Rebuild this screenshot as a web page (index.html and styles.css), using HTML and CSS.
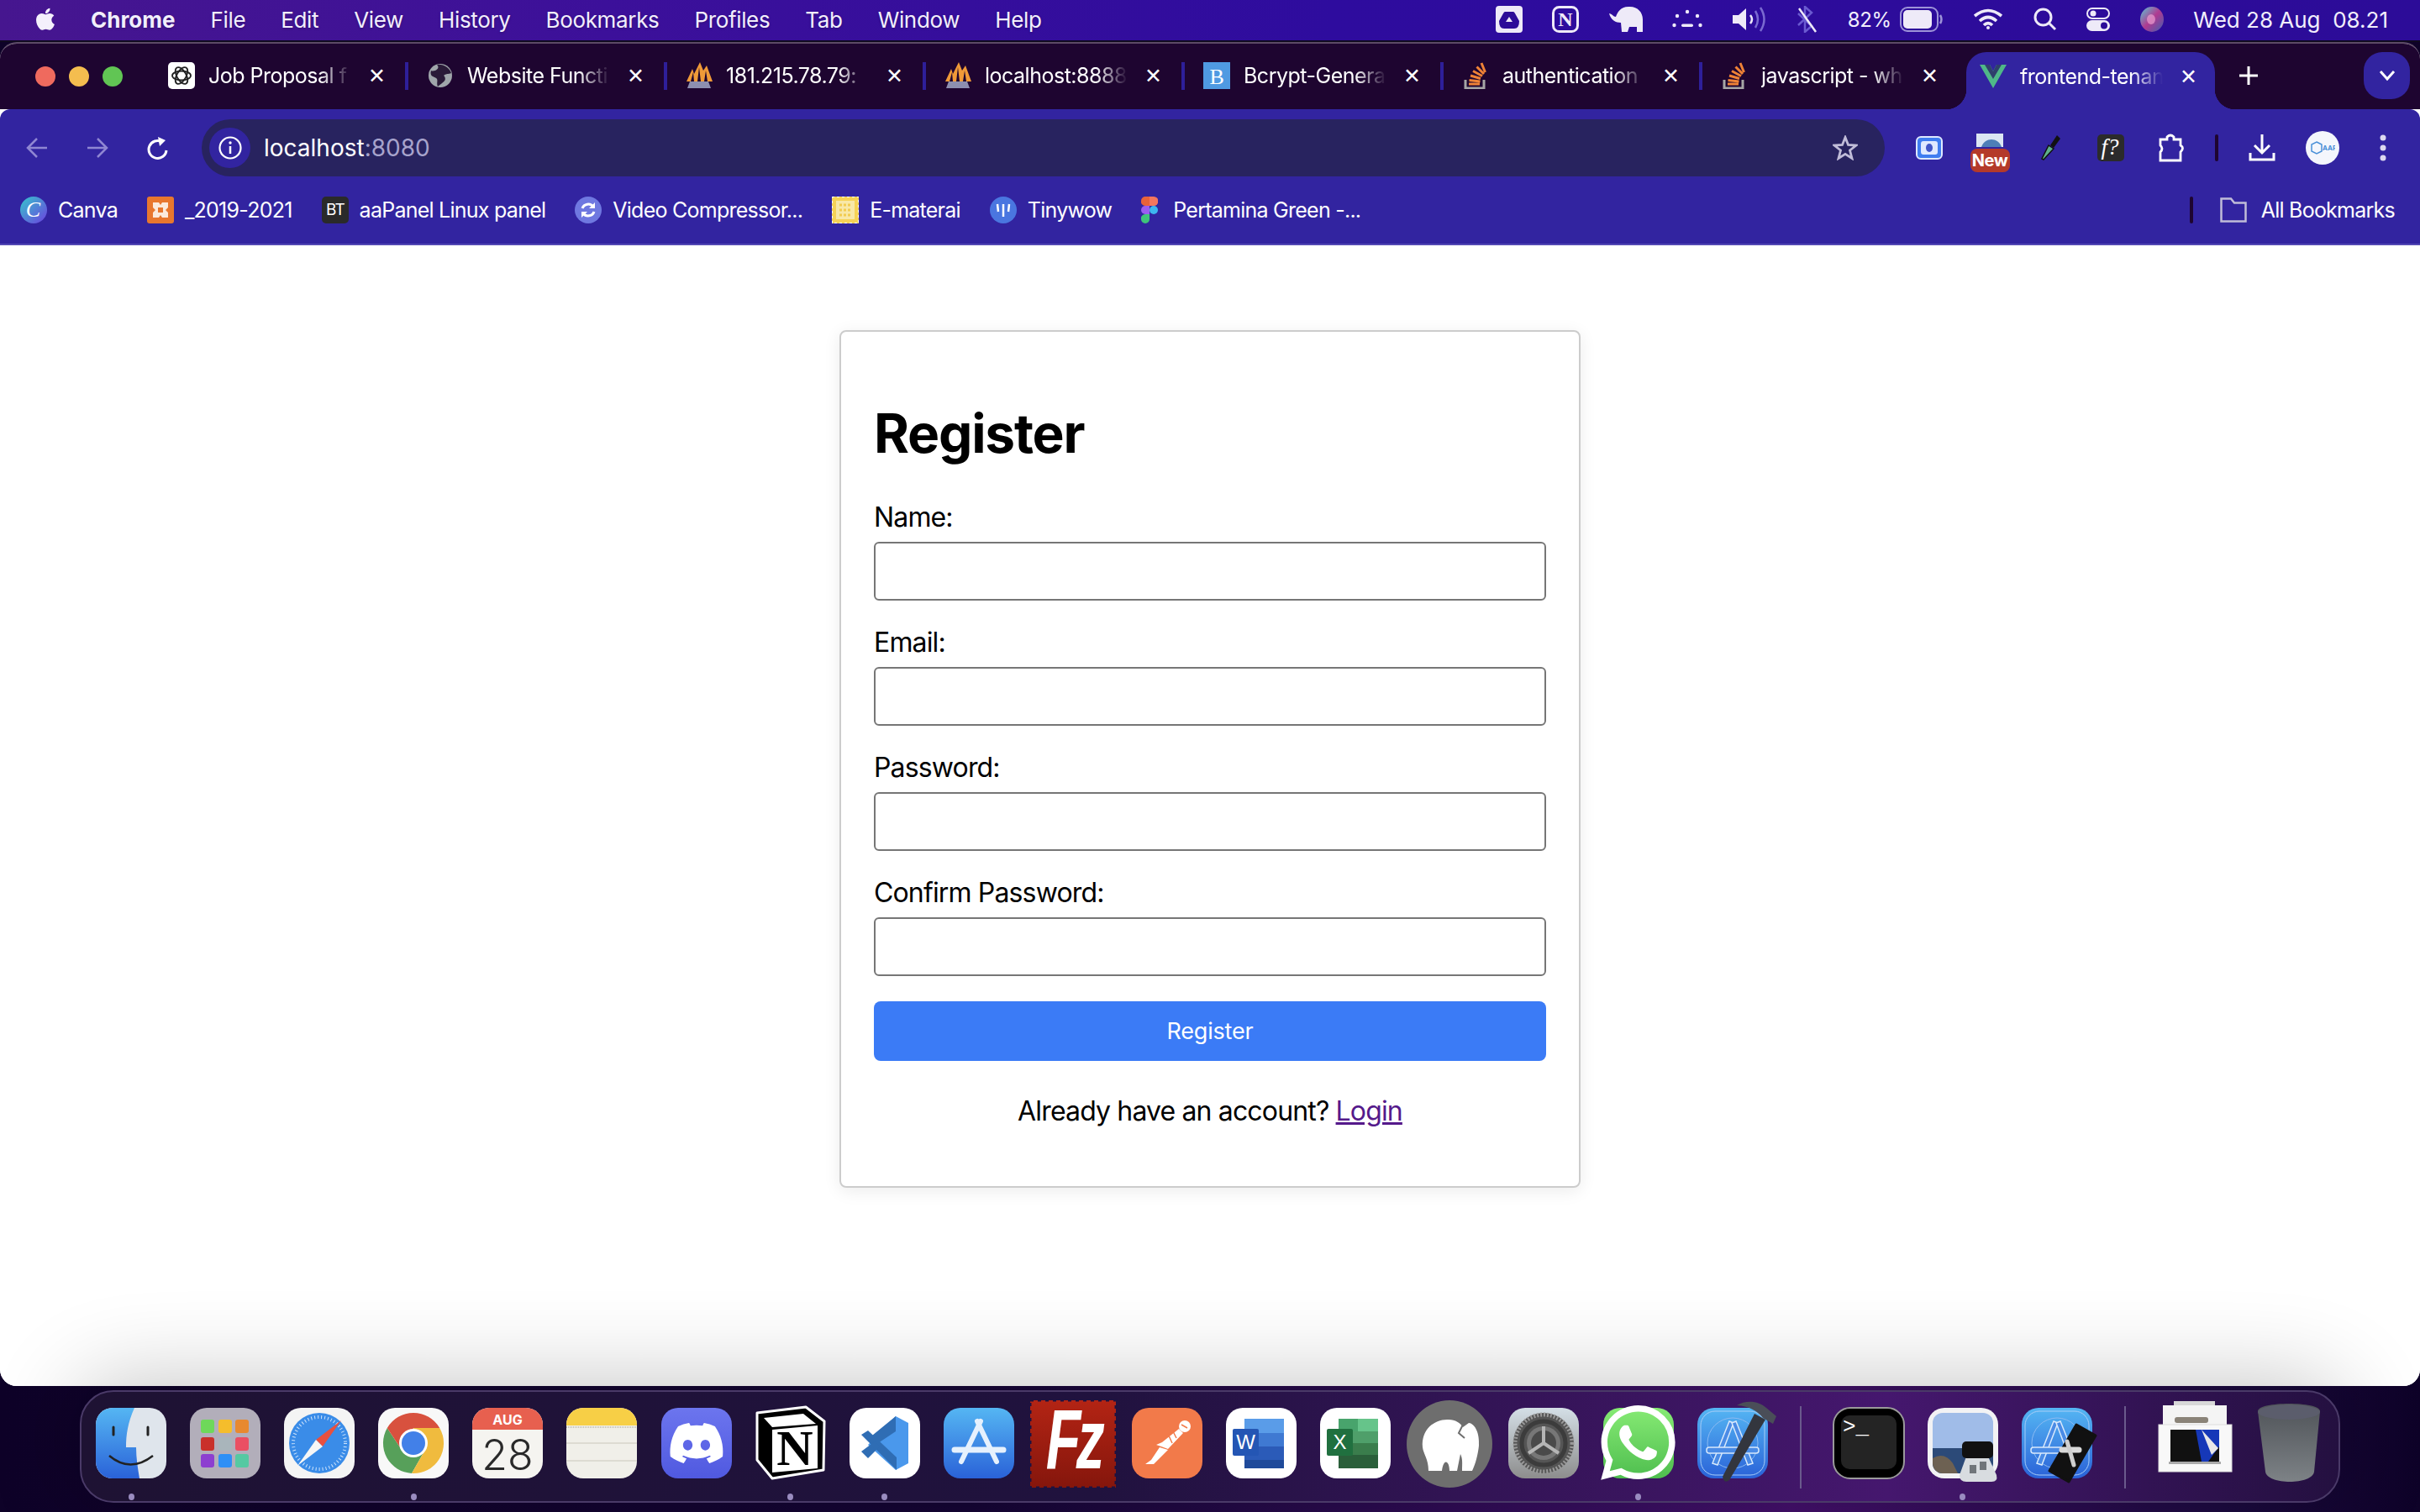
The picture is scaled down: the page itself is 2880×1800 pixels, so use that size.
FILE: index.html
```html
<!DOCTYPE html>
<html lang="en">
<head>
  <meta charset="UTF-8">
  <title>frontend-tenant</title>
  <link rel="stylesheet" href="styles.css">
</head>
<body>

  <svg class="defs" width="0" height="0">
    <symbol id="pma" viewBox="0 0 32 32">
      <path d="M17 0 21 10 25 4 32 23H1L8 8 10 14Z" fill="#f09a38"/>
      <path d="M16 6 14 23H18ZM9 12 6 23H10ZM24 10 22 23H26Z" fill="#1e0530"/>
      <path d="M2 31 5 23H27L30 31Z" fill="#8d8fb0"/>
    </symbol>
    <symbol id="so" viewBox="0 0 32 32">
      <path d="M4 21V31H26V21" fill="none" stroke="#a6a6a6" stroke-width="3"/>
      <path d="M8 26H21M8.500 21.500 21.500 23M10 16 22 19.500M13 10.500 24 16.500M17.500 5.500 26 14M23 1 27.500 12" fill="none" stroke="#ef8236" stroke-width="3"/>
    </symbol>
    <symbol id="elephant" viewBox="0 0 74 66">
      <path d="M5 36C3 14 20 2 36 3 44 3 50 7 53 12L60 7C68 8 73 20 72 34 71 44 68 56 64 64H52C52 56 53 50 50 44L46 64H37C37 52 30 48 28 64H12C12 50 6 44 5 36Z"/>
    </symbol>
    <symbol id="appstore-a" viewBox="0 0 84 84">
      <g fill="none" stroke-linecap="round">
        <path d="M44 16 21 64M40 16 63 64" stroke-width="6"/>
        <path d="M13 50H71" stroke-width="7"/>
      </g>
    </symbol>
    <symbol id="blueprint" viewBox="0 0 84 84">
      <rect width="84" height="84" rx="20" fill="url(#blueGrad)"/>
      <rect x="4" y="4" width="76" height="76" rx="17" fill="none" stroke="#a8cdf7" stroke-width="1"/>
      <circle cx="42" cy="42" r="30" fill="none" stroke="#8bbbf2" stroke-width="1"/>
      <g fill="#4a8be6" stroke="#d8e9fc" stroke-width="1.500">
        <path d="M38 16 43 18 24 68 18 66Z"/>
        <path d="M46 16 41 18 60 68 66 66Z"/>
        <rect x="11" y="47" width="62" height="7" rx="3"/>
      </g>
    </symbol>
    <linearGradient id="blueGrad" x1="0" y1="0" x2="0" y2="1">
      <stop offset="0" stop-color="#55b6f3"/>
      <stop offset="1" stop-color="#2a62d8"/>
    </linearGradient>
    <linearGradient id="orbGrad" x1="0" y1="0" x2="1" y2="1">
      <stop offset="0" stop-color="#58c8d8"/>
      <stop offset=".5" stop-color="#b03a90"/>
      <stop offset="1" stop-color="#3f5fb0"/>
    </linearGradient>
    <linearGradient id="fzGrad" x1="0" y1="0" x2="0" y2="1">
      <stop offset="0" stop-color="#b32414"/>
      <stop offset="1" stop-color="#85160c"/>
    </linearGradient>
    <linearGradient id="waGrad" x1="0" y1="0" x2="0" y2="1">
      <stop offset="0" stop-color="#86ea74"/>
      <stop offset="1" stop-color="#4fbe4f"/>
    </linearGradient>
    <linearGradient id="gearGrad" x1="0" y1="0" x2="0" y2="1">
      <stop offset="0" stop-color="#d4dfe6"/>
      <stop offset="1" stop-color="#8d8d8d"/>
    </linearGradient>
    <linearGradient id="trashGrad" x1="0" y1="0" x2="0" y2="1">
      <stop offset="0" stop-color="#4f5358"/>
      <stop offset="1" stop-color="#7d8286"/>
    </linearGradient>
    <linearGradient id="discordGrad" x1="0" y1="0" x2="0" y2="1">
      <stop offset="0" stop-color="#6c75ee"/>
      <stop offset="1" stop-color="#5059e0"/>
    </linearGradient>
  </svg>

  <header class="menubar">
    <div class="menu-left">
      <svg class="apple" viewBox="3 2.500 18 18.500"><path d="M17.050 20.280c-.98.950-2.050.800-3.080.350-1.090-.460-2.090-.480-3.240 0-1.440.620-2.200.440-3.060-.350C2.790 15.250 3.510 7.590 9.050 7.310c1.350.070 2.290.740 3.080.800 1.180-.240 2.310-.930 3.570-.840 1.510.120 2.650.720 3.400 1.800-3.120 1.870-2.380 5.980.48 7.130-.57 1.500-1.310 2.990-2.540 4.090zM12.030 7.250c-.150-2.230 1.660-4.070 3.740-4.250.290 2.580-2.340 4.500-3.740 4.250z"/></svg>
      <b>Chrome</b><span>File</span><span>Edit</span><span>View</span><span>History</span><span>Bookmarks</span><span>Profiles</span><span>Tab</span><span>Window</span><span>Help</span>
    </div>
    <div class="menu-right">
      <svg width="32" height="32" viewBox="0 0 32 32"><rect width="32" height="32" rx="4" fill="#eeeaf8"/><path d="M11 7H21Q22 7 23 9L28 18Q28 27 22 27H10Q4 27 4 18L9 9Q10 7 11 7Z" fill="#2c0c98"/><path d="M16 13 20 19H12Z" fill="#eeeaf8"/></svg>
      <svg width="32" height="32" viewBox="0 0 32 32"><rect x="1.500" y="1.500" width="29" height="29" rx="7" fill="none" stroke="#eeeaf8" stroke-width="3"/><text x="16" y="24" class="st-n">N</text></svg>
      <svg width="40" height="32" viewBox="0 0 40 32" fill="#eeeaf8"><path d="M0 9C3 9 5 13 8 13 10 8 13 1 23 1 33 0 40 7 40 16V31H33V25H24L22 31H15L14 20C8 20 2 17 0 9Z"/></svg>
      <svg width="36" height="24" viewBox="0 0 36 24" fill="#eeeaf8"><circle cx="18" cy="3" r="2.200"/><circle cx="6" cy="8" r="2.200"/><circle cx="30" cy="8" r="2.200"/><circle cx="2.500" cy="19" r="2.200"/><rect x="11" y="17.500" width="14" height="3.500" rx="1.700"/><circle cx="33.500" cy="19" r="2.200"/></svg>
      <svg width="40" height="32" viewBox="0 0 40 32"><path d="M0 11H7L16 3V29L7 21H0Z" fill="#eeeaf8"/><path d="M21 11Q25 16 21 21" fill="none" stroke="#eeeaf8" stroke-width="2.500"/><path d="M27 6Q33 16 27 26M33 2Q42 16 33 30" fill="none" stroke="#7a6ad0" stroke-width="2.500"/></svg>
      <svg width="26" height="32" viewBox="0 0 26 32" fill="none" stroke-width="2.500"><path d="M3 9 19 24 11 31V1L19 8 3 23" stroke="#6a5ad0"/><path d="M4 3 24 31" stroke="#eeeaf8"/></svg>
      <div class="battery-group">
        <span>82%</span>
        <svg width="52" height="30" viewBox="0 0 52 30"><rect x="1" y="1" width="44" height="28" rx="8" fill="none" stroke="#9d93d8" stroke-width="2"/><rect x="4" y="4" width="34" height="22" rx="5" fill="#eeeaf8"/><path d="M48 10Q51 15 48 20" fill="none" stroke="#9d93d8" stroke-width="2.500"/></svg>
      </div>
      <svg width="36" height="26" viewBox="0 0 36 26" fill="none" stroke="#eeeaf8" stroke-width="3.600"><path d="M2 9Q18 -4 34 9M8 15Q18 6 28 15M13 20Q18 15 23 20"/><circle cx="18" cy="23" r="2" fill="#eeeaf8" stroke="none"/></svg>
      <svg width="28" height="28" viewBox="0 0 28 28" fill="none" stroke="#eeeaf8" stroke-width="3"><circle cx="11.500" cy="11.500" r="9.500"/><path d="M18 18 26 26"/></svg>
      <svg width="28" height="28" viewBox="0 0 28 28"><rect x="1" y="1" width="26" height="12" rx="6" fill="none" stroke="#eeeaf8" stroke-width="2"/><circle cx="8" cy="7" r="3.500" fill="#eeeaf8"/><rect y="15" width="28" height="13" rx="6.500" fill="#eeeaf8"/><circle cx="21" cy="21.500" r="4" fill="#2c0c98"/></svg>
      <svg width="28" height="30" viewBox="0 0 28 30"><ellipse cx="14" cy="15" rx="14" ry="15" fill="url(#orbGrad)"/><ellipse cx="13" cy="15" rx="5" ry="6" fill="#e9a0d0" opacity=".7"/></svg>
      <span class="clock">Wed 28 Aug&nbsp; 08.21</span>
    </div>
  </header>

  <div class="window">
    <div class="tabstrip">
      <div class="traffic">
        <i class="red"></i><i class="yellow"></i><i class="green"></i>
      </div>
      <div class="tab">
        <svg width="32" height="32" viewBox="0 0 32 32"><rect width="32" height="32" rx="5" fill="#fff"/><g fill="none" stroke="#222" stroke-width="1.800"><ellipse cx="16" cy="16" rx="11" ry="5.500"/><ellipse cx="16" cy="16" rx="11" ry="5.500" transform="rotate(60 16 16)"/><ellipse cx="16" cy="16" rx="11" ry="5.500" transform="rotate(120 16 16)"/></g></svg>
        <span class="tab-title">Job Proposal f</span><span class="tab-x">✕</span>
      </div>
      <div class="tab">
        <svg width="32" height="32" viewBox="0 0 32 32"><circle cx="16" cy="16" r="14" fill="#a0a6ab"/><path d="M12 3C17 8 8 12 5 10 3 17 8 17 11 19 14 21 11 25 13 29 19 24 24 22 21 17 18 14 28 14 29 13 27 7 20 2 12 3Z" fill="#2a1a38"/></svg>
        <span class="tab-title">Website Functi</span><span class="tab-x">✕</span>
      </div>
      <div class="tab">
        <svg width="32" height="32"><use href="#pma"/></svg>
        <span class="tab-title">181.215.78.79:</span><span class="tab-x">✕</span>
      </div>
      <div class="tab">
        <svg width="32" height="32"><use href="#pma"/></svg>
        <span class="tab-title">localhost:8888</span><span class="tab-x">✕</span>
      </div>
      <div class="tab">
        <svg width="32" height="32" viewBox="0 0 32 32"><rect width="32" height="32" fill="#4f9ae2"/><text x="16" y="26" class="fav-b">B</text></svg>
        <span class="tab-title">Bcrypt-Genera</span><span class="tab-x">✕</span>
      </div>
      <div class="tab">
        <svg width="32" height="32"><use href="#so"/></svg>
        <span class="tab-title">authentication</span><span class="tab-x">✕</span>
      </div>
      <div class="tab tab-last">
        <svg width="32" height="32"><use href="#so"/></svg>
        <span class="tab-title">javascript - wh</span><span class="tab-x">✕</span>
      </div>
      <div class="tab tab-active">
        <svg width="32" height="32" viewBox="0 0 32 32"><path d="M0 2H12L16 10 20 2H32L16 30Z" fill="#4fb888"/><path d="M6 2H12L16 10 20 2H26L16 19Z" fill="#2f3f6c"/></svg>
        <span class="tab-title">frontend-tenan</span><span class="tab-x">✕</span>
      </div>
      <svg class="new-tab" width="24" height="24" viewBox="0 0 24 24"><path d="M12 1V23M1 12H23" stroke="#fff" stroke-width="3"/></svg>
      <div class="tab-search">
        <svg width="20" height="14" viewBox="0 0 20 14"><path d="M2 2 10 11 18 2" fill="none" stroke="#fff" stroke-width="3"/></svg>
      </div>
    </div>

    <div class="toolbar">
      <div class="navrow">
        <div class="nav-btns">
          <svg width="26" height="26" viewBox="0 0 26 26" fill="none" stroke="#8f86d2" stroke-width="2.500"><path d="M25 13H2M13 2 2 13 13 24"/></svg>
          <svg width="26" height="26" viewBox="0 0 26 26" fill="none" stroke="#8f86d2" stroke-width="2.500"><path d="M1 13H24M13 2 24 13 13 24"/></svg>
          <svg width="26" height="28" viewBox="0 0 26 28" fill="none" stroke="#fff" stroke-width="3"><path d="M23 17A10.500 10.500 0 1 1 18 7"/><path d="M13 1 22 5 15 12Z" fill="#fff" stroke="none"/></svg>
        </div>
        <div class="omnibox">
          <div class="site-info">
            <svg width="28" height="28" viewBox="0 0 28 28"><circle cx="14" cy="14" r="12.500" fill="none" stroke="#fff" stroke-width="2.200"/><path d="M14 12V21" stroke="#fff" stroke-width="2.500"/><circle cx="14" cy="8" r="1.700" fill="#fff"/></svg>
          </div>
          <span class="url">localhost<em>:8080</em></span>
          <svg class="star" width="30" height="30" viewBox="0 0 30 30"><path d="M15 2.500 18.500 11.500 28 12 20.500 18 23 27.500 15 22.300 7 27.500 9.500 18 2 12 11.500 11.500Z" fill="none" stroke="#c0bcd8" stroke-width="2.800"/></svg>
        </div>
        <div class="actions">
          <div class="action"><svg width="32" height="28" viewBox="0 0 32 28"><rect x="1" y="1" width="30" height="26" rx="5" fill="#3f7df0" stroke="#dfe9ff" stroke-width="2"/><rect x="6" y="6" width="20" height="16" rx="3" fill="#dfe9ff"/><ellipse cx="16" cy="14" rx="4" ry="5" fill="#4256c8"/></svg></div>
          <div class="action action-new"><svg width="32" height="16" viewBox="0 0 32 16"><rect width="32" height="16" fill="#dbe6f2"/><path d="M6 16C10 4 26 4 30 16Z" fill="#4d7fb8"/></svg><span class="badge">New</span></div>
          <div class="action"><svg width="28" height="34" viewBox="0 0 28 34"><path d="M22 2 14 14 18 17 26 6Z" fill="#111"/><path d="M12 14 4 30 6 31 18 18Z" fill="#5eb08a" stroke="#111" stroke-width="1.500"/></svg></div>
          <div class="action"><svg width="32" height="32" viewBox="0 0 32 32"><rect width="32" height="32" rx="5" fill="#2b2b2b"/><text x="15" y="24" class="fav-f">f?</text></svg></div>
          <div class="action"><svg width="32" height="34" viewBox="0 0 32 34" fill="none" stroke="#fff" stroke-width="2.800"><path d="M3 7H11V4Q15 0 19 4V7H27V14Q32 17 27 22V32H3V22Q7 18 3 14Z"/></svg></div>
          <div class="action-sep"></div>
          <div class="action"><svg width="32" height="32" viewBox="0 0 32 32" fill="none" stroke="#fff" stroke-width="3"><path d="M16 0V22M7 13 16 22 25 13M2 22V30H30V22"/></svg></div>
          <div class="action"><div class="avatar"><svg width="30" height="16" viewBox="0 0 30 16"><path d="M8 1 14 4V12L8 15 2 12V4Z" fill="none" stroke="#4a90d8" stroke-width="1.500"/><text x="15" y="11" class="avatar-text">AAR</text></svg></div></div>
          <div class="action"><svg width="8" height="32" viewBox="0 0 8 32" fill="#dcd8f0"><circle cx="4" cy="4" r="3.500"/><circle cx="4" cy="16" r="3.500"/><circle cx="4" cy="28" r="3.500"/></svg></div>
        </div>
      </div>

      <div class="bookmarks">
        <a class="bm"><svg width="32" height="32" viewBox="0 0 32 32"><defs><linearGradient id="canvaGrad" x1="0" y1="0" x2="1" y2="1"><stop offset="0" stop-color="#35c8cc"/><stop offset="1" stop-color="#6d3fe0"/></linearGradient></defs><circle cx="16" cy="16" r="16" fill="url(#canvaGrad)"/><text x="15" y="24" class="fav-c">C</text></svg>Canva</a>
        <a class="bm"><svg width="32" height="32" viewBox="0 0 32 32"><rect width="32" height="32" rx="3" fill="#e8772e"/><path d="M7 7H14L16 10 18 7H25V13L22 16 25 19V25H18L16 22 14 25H7V19L10 16 7 13Z" fill="#fbeadc"/><rect x="13" y="13" width="6" height="6" fill="#e8772e"/></svg>_2019-2021</a>
        <a class="bm"><svg width="32" height="32" viewBox="0 0 32 32"><rect width="32" height="32" rx="5" fill="#2a2a2a"/><text x="16" y="22" class="fav-bt">BT</text></svg>aaPanel Linux panel</a>
        <a class="bm"><svg width="32" height="32" viewBox="0 0 32 32"><circle cx="16" cy="16" r="16" fill="#6f78e0"/><path d="M9 14A7.500 7.500 0 0 1 22 12M23 18A7.500 7.500 0 0 1 10 20" fill="none" stroke="#fff" stroke-width="3"/><path d="M24 7V14H17ZM8 25V18H15Z" fill="#fff"/></svg>Video Compressor...</a>
        <a class="bm"><svg width="32" height="32" viewBox="0 0 32 32"><rect width="32" height="32" fill="#f6d257"/><rect x="5" y="5" width="22" height="22" fill="#f8e8a8"/><path d="M0 0H32V32H0Z" fill="none" stroke="#fff" stroke-width="2" stroke-dasharray="3 3"/><path d="M9 10H23M9 16H23M9 22H23" stroke="#f2cc50" stroke-width="3" stroke-dasharray="3 2"/></svg>E-materai</a>
        <a class="bm"><svg width="32" height="32" viewBox="0 0 32 32"><circle cx="16" cy="16" r="16" fill="#4a76e0"/><path d="M9 9 10 18M16 9V24M23 9 22 18" stroke="#fff" stroke-width="2.500"/></svg>Tinywow</a>
        <a class="bm bm-figma"><svg width="20" height="32" viewBox="0 0 20 32"><path d="M0 5A5 5 0 0 1 5 0H10V11H5A5 5 0 0 1 0 5Z" fill="#e8623a"/><path d="M10 0H15A5 5 0 0 1 15 11H10Z" fill="#f4765e"/><path d="M0 16A5 5 0 0 1 5 11H10V21H5A5 5 0 0 1 0 16Z" fill="#9a5cf0"/><circle cx="15" cy="16" r="5" fill="#3db6f0"/><path d="M0 27A5 5 0 0 1 5 21H10V27A5 5 0 0 1 0 27Z" fill="#3fc47a"/></svg>Pertamina Green -...</a>
        <div class="bm-sep"></div>
        <a class="bm bm-all"><svg width="32" height="30" viewBox="0 0 32 30"><path d="M1.500 28.500V1.500H13L17 6.500H30.500V28.500Z" fill="none" stroke="#c0bcd8" stroke-width="2.500"/></svg>All Bookmarks</a>
      </div>
    </div>

    <main class="page">
      <div class="card">
        <h1>Register</h1>
        <form>
          <div class="form-group">
            <label for="name">Name:</label>
            <input id="name" type="text">
          </div>
          <div class="form-group">
            <label for="email">Email:</label>
            <input id="email" type="email">
          </div>
          <div class="form-group">
            <label for="password">Password:</label>
            <input id="password" type="password">
          </div>
          <div class="form-group">
            <label for="confirm">Confirm Password:</label>
            <input id="confirm" type="password">
          </div>
          <button type="button" class="submit">Register</button>
        </form>
        <p class="switch">Already have an account? <a href="#">Login</a></p>
      </div>
    </main>
  </div>

  <footer class="dock">
    <div class="dock-item on"><svg viewBox="0 0 84 84"><rect width="84" height="84" rx="20" fill="#dfe5ec"/><path d="M20 0H46C38 18 36 32 36 47H48C48 60 50 72 52 84H20A20 20 0 0 1 0 64V20A20 20 0 0 1 20 0Z" fill="url(#blueGrad)"/><path d="M21 23V32M62 23V32" stroke="#222" stroke-width="3" stroke-linecap="round"/><path d="M16 57Q41 78 68 57" fill="none" stroke="#222" stroke-width="2.500"/></svg><span class="dot"></span></div>
    <div class="dock-item"><svg viewBox="0 0 84 84"><rect width="84" height="84" rx="20" fill="#b2aeba"/><g><rect x="13" y="14" width="16" height="16" rx="3" fill="#6ed85a"/><rect x="34" y="14" width="16" height="16" rx="3" fill="#f5bd2c"/><rect x="54" y="14" width="16" height="16" rx="3" fill="#e8892f"/><rect x="13" y="35" width="16" height="16" rx="3" fill="#c9302a"/><rect x="34" y="35" width="16" height="16" rx="3" fill="#a9b5bb"/><rect x="54" y="35" width="16" height="16" rx="3" fill="#ea4f63"/><rect x="13" y="55" width="16" height="16" rx="3" fill="#8d3fd0"/><rect x="34" y="55" width="16" height="16" rx="3" fill="#2f8ff6"/><rect x="54" y="55" width="16" height="16" rx="3" fill="#55c9a2"/></g></svg></div>
    <div class="dock-item"><svg viewBox="0 0 84 84"><rect width="84" height="84" rx="20" fill="#f4f4f4"/><circle cx="42" cy="42" r="36" fill="#3a8ce8"/><circle cx="42" cy="42" r="31" fill="none" stroke="#cfe4fb" stroke-width="4" stroke-dasharray="1 3"/><path d="M68 15 46 46 38 38Z" fill="#e8503f"/><path d="M16 69 38 38 46 46Z" fill="#f6f6f6"/></svg></div>
    <div class="dock-item on"><svg viewBox="0 0 84 84"><rect width="84" height="84" rx="20" fill="#f8f8f8"/><path d="M10.800 24A36 36 0 0 0 40 78L56 50H28Z" fill="#57a05a"/><path d="M73.200 24A36 36 0 0 1 40 78L56 50 42 24Z" fill="#f0bb3e"/><path d="M10.800 24A36 36 0 0 1 73.200 24H42L28 50Z" fill="#d8513e"/><circle cx="42" cy="42" r="17" fill="#fff"/><circle cx="42" cy="42" r="14" fill="#4280e8"/></svg><span class="dot"></span></div>
    <div class="dock-item"><svg viewBox="0 0 84 84"><rect width="84" height="84" rx="20" fill="#f5f4f0"/><path d="M0 26V20A20 20 0 0 1 20 0H64A20 20 0 0 1 84 20V26Z" fill="#e7604f"/><text x="42" y="20" class="cal-mon">AUG</text><text x="42" y="74" class="cal-day">28</text></svg></div>
    <div class="dock-item"><svg viewBox="0 0 84 84"><rect width="84" height="84" rx="20" fill="#f0efe9"/><path d="M0 21V20A20 20 0 0 1 20 0H64A20 20 0 0 1 84 20V21Z" fill="#f7cf46"/><path d="M0 23H84" stroke="#c8c4b8" stroke-width="2" stroke-dasharray="1 1"/><path d="M0 42H84M0 63H84" stroke="#dddbd2" stroke-width="2"/></svg></div>
    <div class="dock-item"><svg viewBox="0 0 84 84"><rect width="84" height="84" rx="20" fill="url(#discordGrad)"/><g transform="translate(10.500 10.500) scale(2.620)"><path fill="#fff" d="M20.317 4.370a19.791 19.791 0 00-4.885-1.515.074.074 0 00-.079.037c-.211.375-.445.865-.608 1.250-1.845-.276-3.680-.276-5.487 0-.164-.393-.406-.874-.618-1.250a.077.077 0 00-.079-.037 19.736 19.736 0 00-4.885 1.515.070.070 0 00-.032.028C.533 9.046-.319 13.580.099 18.058a.082.082 0 00.031.056c2.053 1.508 4.041 2.423 5.993 3.029a.078.078 0 00.084-.028c.462-.630.873-1.295 1.226-1.994a.076.076 0 00-.042-.106c-.653-.248-1.274-.550-1.872-.892a.077.077 0 01-.008-.128c.126-.094.252-.192.372-.291a.074.074 0 01.078-.011c3.928 1.793 8.180 1.793 12.061 0a.074.074 0 01.079.010c.120.099.246.198.373.292a.077.077 0 01-.007.128 12.299 12.299 0 01-1.873.891.077.077 0 00-.041.107c.360.698.772 1.363 1.225 1.993a.076.076 0 00.084.029c1.961-.607 3.950-1.522 6.002-3.029a.077.077 0 00.031-.055c.500-5.177-.838-9.674-3.549-13.660a.061.061 0 00-.031-.029zM8.020 15.331c-1.183 0-2.157-1.086-2.157-2.419 0-1.333.956-2.419 2.157-2.419 1.211 0 2.176 1.095 2.157 2.419 0 1.333-.956 2.419-2.157 2.419zm7.975 0c-1.183 0-2.157-1.086-2.157-2.419 0-1.333.955-2.419 2.157-2.419 1.211 0 2.176 1.095 2.157 2.419 0 1.333-.946 2.419-2.157 2.419z"/></g></svg></div>
    <div class="dock-item on"><svg viewBox="0 0 84 84"><path d="M2 6 60 -1 82 16 81 74 20 84 2 62Z" fill="#000" stroke="#fff" stroke-width="3" stroke-linejoin="round"/><path d="M10 12 57 7 72 19 20 23Z" fill="#fff"/><path d="M20 26 74 21V72L20 77Z" fill="#fff"/><text x="47" y="68" class="notion-n">N</text></svg><span class="dot"></span></div>
    <div class="dock-item on"><svg viewBox="0 0 84 84"><rect width="84" height="84" rx="20" fill="#fff"/><path d="M55 10 70 18V66L55 74 22 44Z" fill="#4a98ec"/><path d="M55 10V28L31 44 22 37Z M14 32 22 27 56 59V74Z" fill="#2f6db4"/><path d="M14 52 30 40 36 46 22 60Z" fill="#2f6db4"/></svg><span class="dot"></span></div>
    <div class="dock-item"><svg viewBox="0 0 84 84"><rect width="84" height="84" rx="20" fill="url(#blueGrad)"/><svg width="84" height="84" stroke="#e6f1fd"><use href="#appstore-a"/></svg></svg></div>
    <div class="dock-item"><svg viewBox="0 0 84 84"><rect x="-9" y="-9" width="102" height="104" fill="url(#fzGrad)"/><rect x="-9" y="-9" width="102" height="104" fill="none" stroke="#1e1240" stroke-width="3" stroke-dasharray="4 5"/><text transform="translate(42 72) scale(.68 1)" class="fz">Fz</text></svg></div>
    <div class="dock-item"><svg viewBox="0 0 84 84"><rect width="84" height="84" rx="20" fill="#f27a4a"/><circle cx="63" cy="22" r="7" fill="#fff"/><path d="M56 25 61 30 43 49 35 46 29 44 36 41Z" fill="#fff"/><path d="M33 47 43 50 26 67H16L23 62Z" fill="#fff"/><path d="M43 31 48 42M49 28 53 36" stroke="#f27a4a" stroke-width="1.500"/><path d="M59 20 66 24" stroke="#f27a4a" stroke-width="1.500"/></svg></div>
    <div class="dock-item"><svg viewBox="0 0 84 84"><rect width="84" height="84" rx="20" fill="#fff"/><rect x="22" y="13" width="47" height="17" fill="#5a9ce8"/><rect x="22" y="30" width="47" height="16" fill="#3f79d2"/><rect x="22" y="46" width="47" height="16" fill="#2b5bb8"/><rect x="22" y="62" width="47" height="10" fill="#1f4a9a"/><rect x="8" y="25" width="31" height="32" rx="2" fill="#2456b4"/><text x="23.500" y="49" class="office">W</text></svg></div>
    <div class="dock-item"><svg viewBox="0 0 84 84"><rect width="84" height="84" rx="20" fill="#fff"/><rect x="22" y="13" width="23" height="29" fill="#48a46c"/><rect x="45" y="13" width="24" height="29" fill="#66c48a"/><rect x="22" y="28" width="47" height="14" fill="#4f9f6a"/><rect x="22" y="42" width="47" height="14" fill="#3a7d4c"/><rect x="22" y="56" width="47" height="16" fill="#2a5f3a"/><rect x="8" y="25" width="31" height="32" rx="2" fill="#20703f"/><text x="23.500" y="49" class="office">X</text></svg></div>
    <div class="dock-item"><svg viewBox="0 0 84 84"><ellipse cx="42" cy="43" rx="51" ry="52" fill="#6e6e6e"/><svg x="5" y="11" width="74" height="66" viewBox="0 0 74 66" fill="#fff"><use href="#elephant"/></svg><path d="M58 20 53 30 60 36" fill="none" stroke="#6e6e6e" stroke-width="2"/></svg></div>
    <div class="dock-item"><svg viewBox="0 0 84 84"><rect width="84" height="84" rx="20" fill="url(#gearGrad)"/><circle cx="42" cy="42" r="36" fill="#555"/><circle cx="42" cy="42" r="34" fill="none" stroke="#9a9a9a" stroke-width="5" stroke-dasharray="2 2"/><circle cx="42" cy="42" r="26" fill="none" stroke="#3c3c3c" stroke-width="5"/><circle cx="42" cy="42" r="20" fill="#777"/><circle cx="42" cy="42" r="15" fill="#4a4a4a"/><path d="M42 42V22M42 42 60 54M42 42 24 54" stroke="#b5b5b5" stroke-width="4"/></svg></div>
    <div class="dock-item on"><svg viewBox="0 0 84 84"><rect width="84" height="84" rx="20" fill="url(#waGrad)"/><g transform="translate(-3 -3) scale(3.700)"><path fill="#fff" d="M17.472 14.382c-.297-.149-1.758-.867-2.030-.967-.273-.099-.471-.148-.670.150-.197.297-.767.966-.940 1.164-.173.199-.347.223-.644.075-.297-.150-1.255-.463-2.390-1.475-.883-.788-1.480-1.761-1.653-2.059-.173-.297-.018-.458.130-.606.134-.133.298-.347.446-.520.149-.174.198-.298.298-.497.099-.198.050-.371-.025-.520-.075-.149-.669-1.612-.916-2.207-.242-.579-.487-.500-.669-.510-.173-.008-.371-.010-.570-.010-.198 0-.520.074-.792.372-.272.297-1.040 1.016-1.040 2.479 0 1.462 1.065 2.875 1.213 3.074.149.198 2.096 3.200 5.077 4.487.709.306 1.262.489 1.694.625.712.227 1.360.195 1.871.118.571-.085 1.758-.719 2.006-1.413.248-.694.248-1.289.173-1.413-.074-.124-.272-.198-.570-.347m-5.421 7.403h-.004a9.870 9.870 0 01-5.031-1.378l-.361-.214-3.741.982.998-3.648-.235-.374a9.860 9.860 0 01-1.510-5.260c.001-5.450 4.436-9.884 9.888-9.884 2.640 0 5.122 1.030 6.988 2.898a9.825 9.825 0 012.893 6.994c-.003 5.450-4.437 9.884-9.885 9.884m8.413-18.297A11.815 11.815 0 0012.050 0C5.495 0 .160 5.335.157 11.892c0 2.096.547 4.142 1.588 5.945L.057 24l6.305-1.654a11.882 11.882 0 005.683 1.448h.005c6.554 0 11.890-5.335 11.893-11.893a11.821 11.821 0 00-3.480-8.413z"/></g></svg><span class="dot"></span></div>
    <div class="dock-item"><svg viewBox="0 0 84 84"><svg width="84" height="84"><use href="#blueprint"/></svg><path d="M68 7 81 14 38 86Q32 91 30 82Z" fill="#33363e"/><path d="M47 -3C58 -10 74 -8 82 0L94 10 90 19 78 12C72 4 62 -2 47 -3Z" fill="#4a4e58"/></svg></div>
    <div class="dock-sep"></div>
    <div class="dock-item"><svg viewBox="0 0 84 84"><rect width="84" height="84" rx="20" fill="#000" stroke="#9a9a9a" stroke-width="2"/><rect x="9" y="9" width="66" height="64" rx="10" fill="#242424"/><text x="11" y="30" class="term">&gt;_</text></svg></div>
    <div class="dock-item on"><svg viewBox="0 0 84 84"><rect width="84" height="84" rx="20" fill="#f2f2f4"/><rect x="6" y="6" width="72" height="72" rx="12" fill="#a0bce8"/><path d="M6 48H78V66A12 12 0 0 1 66 78H18A12 12 0 0 1 6 66Z" fill="#2c4a78"/><path d="M6 60Q20 52 30 66L36 78H18A12 12 0 0 1 6 66Z" fill="#6d6152"/><path d="M46 58 38 80Q38 88 46 88H76Q84 88 82 80L72 58Z" fill="#d8dce0"/><path d="M50 68H58V78H50ZM62 64H70V74H62Z" fill="#70757a"/><rect x="41" y="40" width="37" height="20" rx="5" fill="#111"/></svg><span class="dot"></span></div>
    <div class="dock-item"><svg viewBox="0 0 84 84"><svg width="84" height="84"><use href="#blueprint"/></svg><path d="M65 20 88 33 56 88 33 75Z" fill="#111" stroke="#111" stroke-width="3" stroke-linejoin="round"/><path d="M48 50H68" stroke="#d8d8d8" stroke-width="7" stroke-linecap="round"/><path d="M54 40 62 68" stroke="#cfcfcf" stroke-width="5" stroke-linecap="round"/></svg></div>
    <div class="dock-sep"></div>
    <div class="dock-item"><svg viewBox="0 0 84 84"><rect x="19" y="-8" width="49" height="6" fill="#d8d8d8"/><rect x="6" y="-3" width="76" height="24" fill="#f4f4f4"/><rect x="20" y="11" width="40" height="7" rx="3" fill="#8a8378"/><rect x="1" y="20" width="87" height="56" fill="#f8f8f8" stroke="#ddd"/><rect x="15" y="26" width="58" height="38" fill="#111"/><path d="M45 26H73V46L60 64H52Z" fill="#1638b8"/><path d="M52 26 72 48 64 56Z" fill="#e8e8e8"/><rect x="13" y="64" width="62" height="3" fill="#aaa"/></svg></div>
    <div class="dock-item"><svg viewBox="0 0 84 84"><path d="M7 4C7 -8 81 -8 81 4L74 76C72 92 18 92 16 76Z" fill="url(#trashGrad)"/><ellipse cx="44" cy="5" rx="37" ry="9" fill="#5b5d6c"/></svg></div>
  </footer>

</body>
</html>
```

FILE: styles.css
```css
* {
  box-sizing: border-box;
}
html, body {
  margin: 0;
  height: 100%;
}
body {
  display: flex;
  flex-direction: column;
  height: 1800px;
  overflow: hidden;
  font-family: Inter, "Liberation Sans", sans-serif;
  background: linear-gradient(90deg, #0e0228 0%, #150535 40%, #3a0f62 68%, #44106c 74%, #1c0a40 92%, #0e0228 100%);
}
.defs {
  position: absolute;
}

/* menu bar */
.menubar {
  display: flex;
  justify-content: space-between;
  align-items: center;
  height: 50px;
  padding: 0 38px 2px 41px;
  border-bottom: 2px solid #100a20;
  background: linear-gradient(90deg, #46168f 0%, #3c109a 25%, #2e0c9e 55%, #2c0c98 100%);
  color: #f2eefc;
  font-size: 26px;
}
.menu-left {
  display: flex;
  align-items: center;
  gap: 42px;
  letter-spacing: -.35px;
  text-shadow: 0 1px 3px rgba(0, 0, 0, .25);
}
.menu-left b {
  font-weight: 700;
  letter-spacing: 0;
}
.apple {
  width: 26px;
  height: 31px;
  margin: 0 -1px 2px 0;
  fill: #f4f0fc;
}
.menu-right {
  display: flex;
  align-items: center;
  gap: 35.500px;
}
.battery-group {
  display: flex;
  align-items: center;
  gap: 10px;
  font-size: 24px;
  letter-spacing: -.3px;
}
.st-n {
  font: 700 24px "Liberation Serif", serif;
  fill: #eeeaf8;
  text-anchor: middle;
}

/* window */
.window {
  display: flex;
  flex-direction: column;
  height: 1600px;
  overflow: hidden;
  border-radius: 20px;
  background: #fff;
  border-top: 2px solid #5c4a66;
}
.tabstrip {
  display: flex;
  align-items: flex-start;
  flex: none;
  height: 78px;
  padding-top: 8px;
  background: #1e0530;
}
.traffic {
  display: flex;
  align-items: center;
  gap: 16px;
  width: 178px;
  height: 62px;
  padding-left: 42px;
}
.traffic i {
  width: 24px;
  height: 24px;
  border-radius: 50%;
}
.red { background: #ef6a5e; }
.yellow { background: #f4bd4f; }
.green { background: #61c554; }

.tab {
  position: relative;
  display: flex;
  align-items: center;
  flex: none;
  width: 308px;
  height: 60px;
  padding-left: 22px;
  color: #fff;
  font-size: 25px;
  letter-spacing: -.5px;
}
.tab::after {
  content: "";
  position: absolute;
  right: 0;
  top: 14px;
  width: 4px;
  height: 33px;
  background: #2e1f9a;
}
.tab svg {
  flex: none;
}
.tab-last::after {
  display: none;
}
.tab-title {
  width: 170px;
  margin-left: 16px;
  overflow: hidden;
  white-space: nowrap;
  -webkit-mask-image: linear-gradient(90deg, #000 78%, transparent 100%);
  mask-image: linear-gradient(90deg, #000 78%, transparent 100%);
}
.tab-x {
  width: 24px;
  margin-left: 18px;
  font-size: 25px;
  line-height: 1;
  text-align: center;
}
.tab-active {
  width: 296px;
  height: 68px;
  margin: 2px 6px 0;
  padding-left: 16px;
  border-radius: 24px 24px 0 0;
  background: #3224a0;
}
.tab-active .tab-title,
.tab-active .tab-x,
.tab-active svg {
  margin-bottom: 10px;
}
.tab-active::before,
.tab-active::after {
  content: "";
  position: absolute;
  top: auto;
  bottom: 0;
  width: 24px;
  height: 24px;
}
.tab-active::before {
  left: -24px;
  background: radial-gradient(circle at 0 0, transparent 24px, #3224a0 24.5px);
}
.tab-active::after {
  right: -24px;
  background: radial-gradient(circle at 100% 0, transparent 24px, #3224a0 24.5px);
}
.new-tab {
  margin: 18px 0 0 22px;
}
.tab-search {
  display: flex;
  align-items: center;
  justify-content: center;
  width: 55px;
  height: 56px;
  margin: 2px 12px 0 auto;
  border-radius: 22px;
  background: #3224a0;
}

/* toolbar */
.toolbar {
  flex: none;
  height: 162px;
  border-bottom: 2px solid #5248b4;
  border-radius: 12px 12px 0 0;
  background: #3224a0;
}
.navrow {
  display: flex;
  align-items: center;
  height: 92px;
  padding: 12px 0;
}
.nav-btns {
  display: flex;
  align-items: center;
  gap: 46px;
  width: 240px;
  padding-left: 31px;
}
.omnibox {
  display: flex;
  align-items: center;
  width: 2003px;
  height: 68px;
  padding: 0 32px 0 9px;
  border-radius: 34px;
  background: #28235f;
  color: #fff;
  font-size: 28px;
}
.site-info {
  display: flex;
  align-items: center;
  justify-content: center;
  width: 49px;
  height: 48px;
  border-radius: 24px;
  background: #3224a0;
}
.url {
  margin-left: 16px;
}
.url em {
  font-style: normal;
  color: #a7a3cc;
}
.star {
  margin-left: auto;
}
.actions {
  display: flex;
  align-items: center;
  margin-left: 17px;
}
.action {
  display: flex;
  flex-direction: column;
  align-items: center;
  justify-content: center;
  width: 72px;
}
.action-sep {
  width: 4px;
  height: 32px;
  margin: 0 16px;
  border-radius: 2px;
  background: #1e0530;
}
.action-new {
  margin-top: 12px;
}
.badge {
  width: 47px;
  margin-top: 2px;
  border-radius: 8px;
  background: #b43a2a;
  color: #fff;
  font-size: 20px;
  font-weight: 700;
  letter-spacing: -.5px;
  line-height: 28px;
  text-align: center;
}
.avatar {
  display: flex;
  align-items: center;
  justify-content: center;
  width: 40px;
  height: 40px;
  border-radius: 50%;
  background: #f4f6fc;
}
.avatar-text {
  font: 700 8px Inter, sans-serif;
  fill: #4a90d8;
}
.fav-b {
  font: 400 26px "Liberation Serif", serif;
  fill: #fff;
  text-anchor: middle;
}
.fav-f {
  font: italic 400 27px "Liberation Serif", serif;
  fill: #fff;
  text-anchor: middle;
}
.fav-c {
  font: italic 400 26px "Liberation Serif", serif;
  fill: #fff;
  text-anchor: middle;
}
.fav-bt {
  font: 400 19px Inter, sans-serif;
  fill: #fff;
  text-anchor: middle;
}

/* bookmarks */
.bookmarks {
  display: flex;
  align-items: center;
  height: 68px;
  padding: 0 30px 12px 24px;
  color: #fff;
  font-size: 25px;
  letter-spacing: -.75px;
}
.bm {
  display: flex;
  align-items: center;
  gap: 13px;
  margin-right: 35px;
  white-space: nowrap;
}
.bm svg {
  flex: none;
}
.bm-figma {
  gap: 18px;
}
.bm-sep {
  width: 4px;
  height: 32px;
  margin-left: auto;
  margin-right: 32px;
  border-radius: 2px;
  background: #1e0530;
}
.bm-all {
  margin-right: 0;
  gap: 17px;
}

/* page */
.page {
  flex: 1;
  padding-top: 101px;
  background: #fff;
  color: #000;
}
.card {
  width: 882px;
  height: 1021px;
  margin: 0 auto;
  padding: 40px 39px;
  border: 2px solid #ccc;
  border-radius: 8px;
  box-shadow: 0 4px 20px rgba(0, 0, 0, .08);
  font-size: 32px;
  letter-spacing: -.85px;
}
.card h1 {
  margin: 42px 0 41px;
  font-size: 64px;
  line-height: 78px;
  font-weight: 700;
  letter-spacing: -1.200px;
}
.form-group {
  margin-bottom: 30px;
}
.form-group label {
  display: block;
  margin-bottom: 10px;
  line-height: 39px;
}
.form-group input {
  display: block;
  width: 100%;
  height: 70px;
  border: 2px solid #767676;
  border-radius: 6px;
  background: #fff;
}
.submit {
  display: block;
  width: 100%;
  height: 71px;
  border: 0;
  border-radius: 8px;
  background: #3b7bf6;
  color: #fff;
  font: 400 27px Inter, sans-serif;
  letter-spacing: -.2px;
}
.switch {
  margin: 40px 0 0;
  line-height: 39px;
  text-align: center;
}
.switch a {
  color: #551a8b;
}

/* dock */
.dock {
  position: relative;
  display: flex;
  align-items: flex-start;
  gap: 28.100px;
  height: 134px;
  margin: 5px 95px 0;
  padding: 19px 17px 0;
  border: 2px solid #4a3a68;
  border-radius: 40px;
  background: linear-gradient(90deg, #1e1233 0%, #20123e 45%, #3b1560 70%, #45176e 80%, #241040 100%);
  box-shadow: 0 -8px 110px rgba(0, 0, 0, .24);
}
.dock-item {
  display: flex;
  flex-direction: column;
  align-items: center;
  flex: none;
  gap: 18px;
  width: 84px;
}
.dock-item > svg {
  width: 84px;
  height: 84px;
  flex: none;
}
.dock-item svg {
  overflow: visible;
}
.dot {
  width: 7px;
  height: 8px;
  border-radius: 50%;
  background: #9a8cc0;
}
.dock-sep {
  flex: none;
  width: 2px;
  height: 98px;
  margin: -2px 10px 0;
  background: #6a5a8c;
}
.cal-mon {
  font: 700 16px Inter, sans-serif;
  fill: #fff;
  text-anchor: middle;
}
.cal-day {
  font: 300 50px Inter, sans-serif;
  fill: #2a2a2a;
  text-anchor: middle;
}
.notion-n {
  font: 700 60px "Liberation Serif", serif;
  fill: #000;
  text-anchor: middle;
}
.fz {
  font: italic 700 100px "Liberation Sans", sans-serif;
  fill: #fff;
  text-anchor: middle;
  letter-spacing: -8px;
}
.office {
  font: 500 24px "Liberation Sans", sans-serif;
  fill: #fff;
  text-anchor: middle;
}
.term {
  font: 400 26px "Liberation Mono", monospace;
  fill: #fff;
}
```
